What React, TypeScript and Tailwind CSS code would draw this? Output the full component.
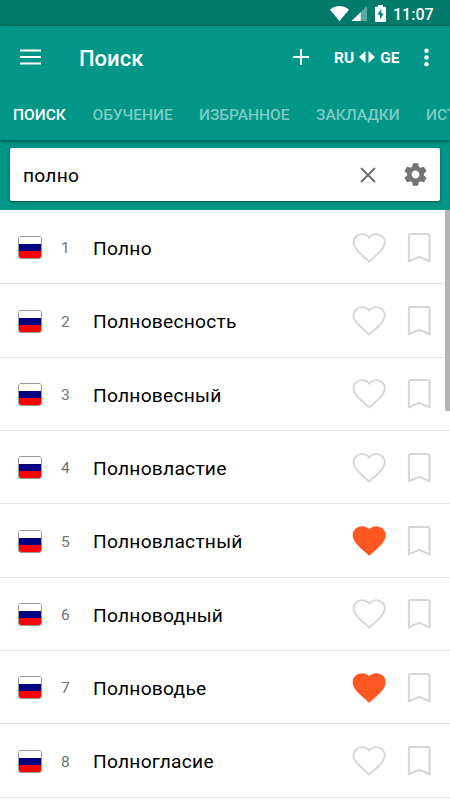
import { clsx } from "clsx";

type Word = {
    id: number;
    title: string;
    favorite?: boolean;
};

const tabs = [
    { label: "ПОИСК", width: "w-[79.5px]" },
    { label: "ОБУЧЕНИЕ", width: "w-[106.5px]" },
    { label: "ИЗБРАННОЕ", width: "w-[117px]" },
    { label: "ЗАКЛАДКИ", width: "w-[110px]" },
    { label: "ИСТОРИЯ", width: "w-[100px]" },
];

const words: Word[] = [
    { id: 1, title: "Полно" },
    { id: 2, title: "Полновесность" },
    { id: 3, title: "Полновесный" },
    { id: 4, title: "Полновластие" },
    { id: 5, title: "Полновластный", favorite: true },
    { id: 6, title: "Полноводный" },
    { id: 7, title: "Полноводье", favorite: true },
    { id: 8, title: "Полногласие" },
];

function StatusBar() {
    return (
        <div className="flex h-[26px] shrink-0 items-center bg-[#007a6b] pl-[330px] text-white">
            <svg className="h-[16px] w-[19px]" viewBox="0 0 19 16" fill="currentColor">
                <path d="M0 4.7C5.2-.1 13.8-.1 19 4.7L9.5 16z" />
            </svg>
            <svg className="ml-[2px] h-[15px] w-[16px]" viewBox="0 0 16 15" fill="currentColor">
                <path d="M16 0v15H.5z" opacity="0.35" />
                <path d="M9.7 6.200V15H.5z" />
            </svg>
            <svg className="ml-[8px] h-[17px] w-[11px]" viewBox="0 0 11 17">
                <path
                    d="M3 0h5v1.800h1.800c.7 0 1.200.5 1.200 1.200v12.700c0 .7-.5 1.300-1.200 1.300H1.200C.5 17 0 16.400 0 15.700V3c0-.7.5-1.200 1.200-1.200H3z"
                    fill="currentColor"
                />
                <path d="M6.300 4L2.500 9.800H5v4.400l3.700-5.800H6.300z" fill="#007a6b" />
            </svg>
            <span className="ml-[7px] pt-[3px] text-[16px] leading-none font-medium">11:07</span>
        </div>
    );
}

function Toolbar() {
    return (
        <div className="flex h-[62px] shrink-0 items-center text-white">
            <button className="ml-[20px] w-[21px]" aria-label="Меню">
                <svg className="h-[16px] w-[21px]" viewBox="0 0 21 16" stroke="currentColor" strokeWidth="2.200">
                    <path d="M0 1.500h21M0 8h21M0 14.500h21" />
                </svg>
            </button>
            <h1 className="ml-[38px] w-[214px] pt-[3px] text-[22px] leading-none font-medium">Поиск</h1>
            <button aria-label="Добавить">
                <svg className="h-[16px] w-[16px]" viewBox="0 0 16 16" stroke="currentColor" strokeWidth="2">
                    <path d="M8 0v16M0 8h16" />
                </svg>
            </button>
            <button className="ml-[25px] flex w-[67px] items-center text-[15.500px] leading-none font-bold">
                <span className="pt-[3px]">RU</span>
                <svg className="mx-[5px] h-[12px] w-[16px] shrink-0" viewBox="0 0 16 12" fill="currentColor">
                    <path d="M6.500 0v12L0 6zM9.500 0v12L16 6z" />
                </svg>
                <span className="pt-[3px]">GE</span>
            </button>
            <button className="ml-[22.500px]" aria-label="Ещё">
                <svg className="h-[19px] w-[5px]" viewBox="0 0 5 19" fill="currentColor">
                    <circle cx="2.500" cy="2.700" r="2.200" />
                    <circle cx="2.500" cy="9.500" r="2.200" />
                    <circle cx="2.500" cy="16.300" r="2.200" />
                </svg>
            </button>
        </div>
    );
}

function HeartIcon({ filled }: { filled?: boolean }) {
    return (
        <svg
            className="h-[30px] w-[34px]"
            viewBox="0 0 34.400 31"
            preserveAspectRatio="none"
            fill={filled ? "#ff5722" : "none"}
            stroke={filled ? "#ff5722" : "#d6d6d6"}
            strokeWidth="1.900"
        >
            <path d="M17.400 29.500l-2.300-2.100C6.700 19.800 1.600 15.300 1.600 9.600c0-4.800 3.700-8.400 8.500-8.400 2.800 0 5.500 1.300 7.300 3.500 1.800-2.200 4.500-3.500 7.300-3.500 4.800 0 8.500 3.600 8.500 8.400 0 5.700-5.100 10.200-13.500 17.800z" />
        </svg>
    );
}

function BookmarkIcon() {
    return (
        <svg className="h-[30px] w-[24px]" viewBox="0 0 24 30" fill="none" stroke="#d6d6d6" strokeWidth="2">
            <path d="M1.900 28.200V2.700c0-1 .6-1.600 1.600-1.600h17.400c1 0 1.600.6 1.600 1.600v25.500L12.200 23.900z" />
        </svg>
    );
}

function WordRow({ word }: { word: Word }) {
    return (
        <li className="flex h-[73.350px] shrink-0 items-center border-b border-[#e4e4e4] pt-[1px] pl-[18px]">
            <span className="flex h-[23px] w-[24px] flex-col overflow-hidden rounded-[3px] border border-[#999]">
                <span className="flex-1 bg-white" />
                <span className="flex-1 bg-[#000080]" />
                <span className="flex-1 bg-[#ff0000]" />
            </span>
            <span className="w-[51px] pt-[3px] pl-[19px] text-[15.500px] leading-none text-[#737373]">{word.id}</span>
            <span className="w-[259px] pt-[2px] text-[19.200px] leading-none tracking-[0.250px] text-black">
                {word.title}
            </span>
            <button aria-label="В избранное">
                <HeartIcon filled={word.favorite} />
            </button>
            <button className="ml-[21px]" aria-label="Закладка">
                <BookmarkIcon />
            </button>
        </li>
    );
}

export default function App() {
    return (
        <div className="relative flex h-[800px] w-[450px] flex-col overflow-hidden bg-white font-['Roboto','Noto_Sans',sans-serif]">
            <StatusBar />
            <header className="z-10 flex h-[114px] shrink-0 flex-col bg-[#009688] shadow-[0_1px_4px_rgba(0,0,0,0.5)]">
                <Toolbar />
                <nav className="flex h-[52px] items-center pt-[3px] pl-[13px]">
                    {tabs.map((tab, i) => (
                        <button
                            key={tab.label}
                            className={clsx(
                                "shrink-0 text-left text-[15.500px] leading-none font-medium",
                                tab.width,
                                i === 0 ? "text-white" : "text-[#7fcac3]",
                            )}
                        >
                            {tab.label}
                        </button>
                    ))}
                </nav>
            </header>

            <div className="h-[70px] shrink-0 bg-[#009688] px-[10px] pt-[8px]">
                <div className="flex h-[53px] items-center rounded-[2px] bg-white pl-[13px] shadow-[0_1px_3px_rgba(0,0,0,0.45)]">
                    <span className="w-[337px] pt-[3px] text-[19.200px] leading-none tracking-[0.250px] text-black">
                        полно
                    </span>
                    <svg className="h-[16px] w-[16px]" viewBox="0 0 16 16" stroke="#6e6e6e" strokeWidth="1.900">
                        <path d="M1 1l14 14M15 1L1 15" />
                    </svg>
                    <svg className="ml-[26px] h-[27px] w-[27px]" viewBox="0 0 24 24" fill="#737373">
                        <path d="M19.430 12.980c.04-.32.07-.64.07-.98s-.03-.66-.07-.98l2.110-1.650c.19-.15.24-.42.12-.64l-2-3.460c-.12-.22-.39-.3-.61-.22l-2.490 1c-.52-.4-1.080-.73-1.690-.98l-.38-2.650C14.460 2.180 14.250 2 14 2h-4c-.25 0-.46.18-.49.42l-.38 2.650c-.61.25-1.170.59-1.690.98l-2.490-1c-.23-.09-.49 0-.61.22l-2 3.460c-.13.22-.07.49.12.64l2.110 1.650c-.04.32-.07.65-.07.98s.03.66.07.98l-2.110 1.650c-.19.15-.24.42-.12.64l2 3.460c.12.22.39.3.61.22l2.490-1c.52.4 1.080.73 1.690.98l.38 2.650c.03.24.24.42.49.42h4c.25 0 .46-.18.49-.42l.38-2.650c.61-.25 1.170-.59 1.690-.98l2.490 1c.23.09.49 0 .61-.22l2-3.460c.12-.22.07-.49-.12-.64l-2.110-1.650zM12 15.500c-1.930 0-3.500-1.570-3.500-3.500s1.570-3.500 3.500-3.500 3.500 1.570 3.500 3.500-1.570 3.500-3.500 3.500z" />
                    </svg>
                </div>
            </div>

            <ul className="flex flex-col pt-[1px]">
                {words.map((word) => (
                    <WordRow key={word.id} word={word} />
                ))}
            </ul>

            {/* Scrollbar thumb over the list */}
            <div className="absolute top-[210px] right-0 h-[201px] w-[5px] bg-[#b5b5b5]" />
        </div>
    );
}
